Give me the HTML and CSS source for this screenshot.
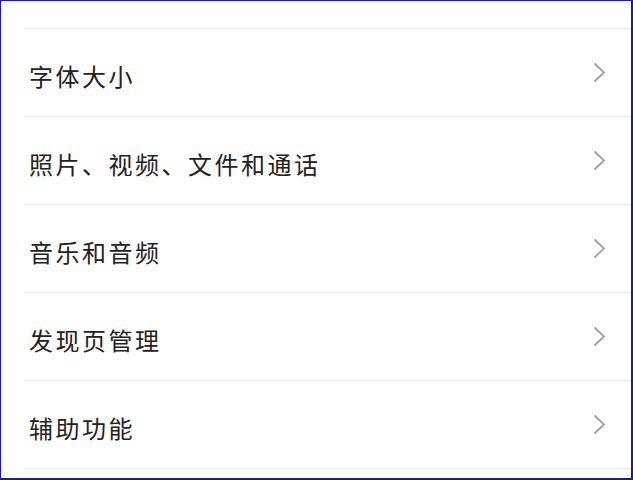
FILE: index.html
```html
<!DOCTYPE html>
<html lang="zh-CN">
<head>
    <meta charset="UTF-8">
    <meta name="viewport" content="width=device-width, initial-scale=1.0">
    <title>通用</title>
    <link rel="stylesheet" href="styles.css">
</head>
<body>
    <div class="frame">
        <ul class="settings-list">
            <li class="setting-row">
                <span class="setting-label">字体大小</span>
                <svg class="chevron" viewBox="0 0 13 21"><path d="M1.5 1.5 L11 10.5 L1.5 19.5"/></svg>
            </li>
            <li class="setting-row">
                <span class="setting-label">照片、视频、文件和通话</span>
                <svg class="chevron" viewBox="0 0 13 21"><path d="M1.5 1.5 L11 10.5 L1.5 19.5"/></svg>
            </li>
            <li class="setting-row">
                <span class="setting-label">音乐和音频</span>
                <svg class="chevron" viewBox="0 0 13 21"><path d="M1.5 1.5 L11 10.5 L1.5 19.5"/></svg>
            </li>
            <li class="setting-row">
                <span class="setting-label">发现页管理</span>
                <svg class="chevron" viewBox="0 0 13 21"><path d="M1.5 1.5 L11 10.5 L1.5 19.5"/></svg>
            </li>
            <li class="setting-row">
                <span class="setting-label">辅助功能</span>
                <svg class="chevron" viewBox="0 0 13 21"><path d="M1.5 1.5 L11 10.5 L1.5 19.5"/></svg>
            </li>
        </ul>
    </div>
</body>
</html>
```

FILE: styles.css
```css
html, body {
    margin: 0;
    padding: 0;
    background-color: #fff;
}
.frame {
    box-sizing: border-box;
    width: 633px;
    height: 480px;
    border: 1px solid #1c1ca0;
    border-right-width: 2px;
    border-bottom-width: 2px;
    padding-top: 27px;
    overflow: hidden;
    background-color: #fff;
}
.settings-list {
    list-style: none;
    margin: 0 0 0 24px;
    padding: 0;
    border-top: 1px solid #ececec;
}
.setting-row {
    box-sizing: border-box;
    height: 88px;
    display: flex;
    align-items: center;
    justify-content: space-between;
    padding: 6px 25px 0 4px;
    border-bottom: 1px solid #ececec;
}
.setting-label {
    font-family: "Noto Sans CJK SC", "Noto Sans", sans-serif;
    font-weight: 400;
    font-size: 24px;
    letter-spacing: 2.5px;
    color: #222;
}
.chevron {
    width: 13px;
    height: 21px;
    margin-top: -6px;
    fill: none;
    stroke: #a0a0a0;
    stroke-width: 1.8;
}
```
